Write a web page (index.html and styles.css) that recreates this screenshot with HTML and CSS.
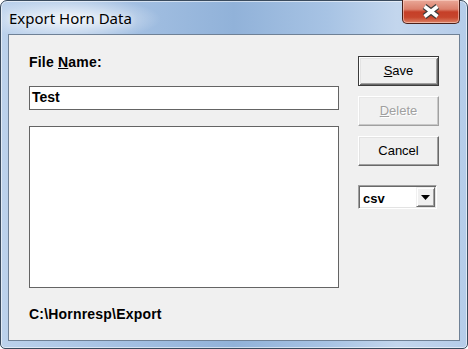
FILE: index.html
```html
<!DOCTYPE html>
<html lang="en">
<head>
<meta charset="UTF-8">
<title>Export Horn Data</title>
<link rel="stylesheet" href="styles.css">
</head>
<body>

<div class="window">
    <div class="titlebar">
        <span class="title">Export Horn Data</span>
        <div class="close">
            <svg width="22" height="15" viewBox="0 0 22 15">
                <path d="M4.5 2.5 L17.5 12.5 M17.5 2.5 L4.5 12.5" stroke="#3b3b3b" stroke-width="6" fill="none"/>
                <path d="M4.5 2.5 L17.5 12.5 M17.5 2.5 L4.5 12.5" stroke="#ffffff" stroke-width="3.6" fill="none"/>
            </svg>
        </div>
    </div>

    <div class="client">
        <div class="main">
            <div class="label">File <u>N</u>ame:</div>
            <div class="field">Test</div>
            <div class="list"></div>
            <div class="path">C:\Hornresp\Export</div>
        </div>
        <div class="side">
            <div class="btn default"><span><u>S</u>ave</span></div>
            <div class="btn disabled"><span><u>D</u>elete</span></div>
            <div class="btn"><span>Cancel</span></div>
            <div class="combo">
                <span class="combo-text">csv</span>
                <div class="drop">
                    <svg width="9" height="5" viewBox="0 0 9 5"><path d="M0 0 H9 L4.5 5 Z" fill="#000"/></svg>
                </div>
            </div>
        </div>
    </div>
</div>

</body>
</html>
```

FILE: styles.css
```css
body {
    margin: 0;
    font-family: 'Liberation Sans', Arial, sans-serif;
    background-color: #ffffff;
}

.window {
    width: 468px;
    height: 349px;
    box-sizing: border-box;
    border: 1px solid #3a4b5e;
    border-radius: 7px 7px 5px 5px;
    padding: 0 7px 7px 7px;
    display: flex;
    flex-direction: column;
    background:
        radial-gradient(ellipse 90px 22px at 70px 18px, rgba(255, 255, 255, 0.85), rgba(255, 255, 255, 0) 100%),
        linear-gradient(to right, #bcd2ec 0%, #a5c1e3 25%, #91b2d9 50%, #a7c3e4 70%, #c3d6ed 85%, #b5cce9 100%);
    box-shadow: inset 0 0 0 1px rgba(255, 255, 255, 0.55);
}

.titlebar {
    height: 33px;
    display: flex;
    justify-content: space-between;
    align-items: flex-start;
}

.title {
    margin-top: 7px;
    margin-left: 1px;
    font-family: 'Noto Sans', 'Open Sans', sans-serif;
    font-size: 15px;
    line-height: 20px;
    color: #000000;
    text-shadow: 0 0 6px rgba(255, 255, 255, 0.9);
}

.close {
    width: 58px;
    height: 24px;
    margin-top: -1px;
    box-sizing: border-box;
    border: 1px solid #4a2019;
    border-top: none;
    border-radius: 0 0 5px 5px;
    display: flex;
    align-items: center;
    justify-content: center;
    background: linear-gradient(to bottom, #e9a898 0%, #db806c 40%, #c53f28 52%, #c7452c 75%, #dc8266 100%);
    box-shadow: inset 0 0 0 1px rgba(255, 220, 210, 0.55);
}

.client {
    flex: 1;
    border: 1px solid #6f8196;
    background-color: #f0f0f0;
    display: flex;
    gap: 19px;
    padding-left: 20px;
}

.main {
    width: 310px;
    padding-top: 19px;
}

.label, .path {
    font-size: 14px;
    font-weight: bold;
    line-height: 16px;
    letter-spacing: 0.2px;
    color: #000000;
}

.field {
    margin-top: 16px;
    height: 24px;
    box-sizing: border-box;
    border: 1px solid #646464;
    background-color: #ffffff;
    padding: 0 2px;
    font-size: 14px;
    font-weight: bold;
    line-height: 20px;
}

.list {
    margin-top: 16px;
    height: 162px;
    box-sizing: border-box;
    border: 1px solid #646464;
    background-color: #ffffff;
}

.path {
    margin-top: 18px;
}

.side {
    width: 81px;
    padding-top: 21px;
    display: flex;
    flex-direction: column;
    gap: 10px;
}

.btn {
    height: 30px;
    box-sizing: border-box;
    display: flex;
    align-items: center;
    justify-content: center;
    font-size: 13px;
    line-height: 16px;
    color: #000000;
    background-color: #f0f0f0;
    border: 1px solid;
    border-color: #ffffff #696969 #696969 #ffffff;
    box-shadow: inset -1px -1px 0 #a0a0a0, inset 1px 1px 0 #e3e3e3;
}

.btn.default {
    border-color: #3c3c3c;
    box-shadow: inset 1px 1px 0 #ffffff, inset -1px -1px 0 #696969, inset 2px 2px 0 #e3e3e3, inset -2px -2px 0 #a0a0a0;
}

.btn.disabled {
    border-color: #ffffff #a0a0a0 #a0a0a0 #ffffff;
    box-shadow: inset -1px -1px 0 #c8c8c8, inset 1px 1px 0 #e8e8e8;
    color: #a0a0a0;
    text-shadow: 1px 1px 0 #ffffff;
}

.combo {
    margin-top: 9px;
    width: 79px;
    height: 24px;
    box-sizing: border-box;
    border: 1px solid;
    border-color: #a0a0a0 #ffffff #ffffff #a0a0a0;
    box-shadow: inset 1px 1px 0 #696969, inset -1px -1px 0 #e3e3e3;
    background-color: #ffffff;
    padding: 1px;
    display: flex;
    align-items: center;
    justify-content: space-between;
}

.combo-text {
    padding-left: 3px;
    padding-top: 2px;
    font-size: 13px;
    font-weight: bold;
}

.drop {
    width: 19px;
    height: 20px;
    box-sizing: border-box;
    border: 1px solid;
    border-color: #f0f0f0 #696969 #696969 #f0f0f0;
    box-shadow: inset 1px 1px 0 #ffffff, inset -1px -1px 0 #a0a0a0;
    background-color: #f0f0f0;
    display: flex;
    align-items: center;
    justify-content: center;
}
```
